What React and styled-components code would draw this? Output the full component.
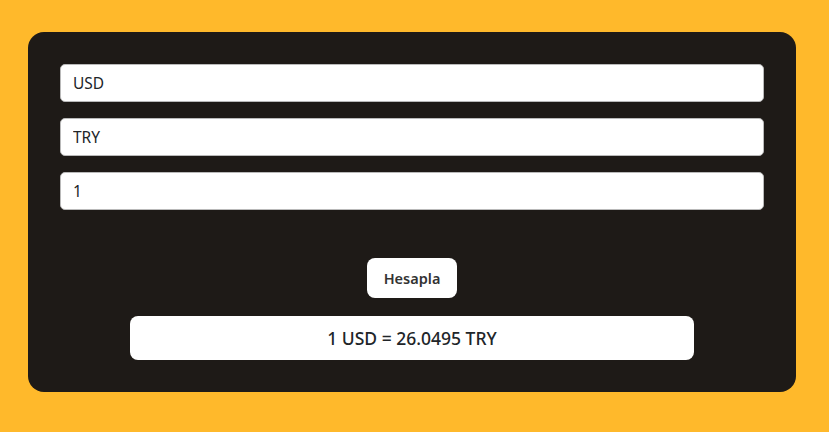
import React from "react";
import styled, { createGlobalStyle } from "styled-components";

const Global = createGlobalStyle`
  html, body { margin: 0; padding: 0; }
  body {
    background: #ffb92b;
    font-family: "Noto Sans", "Open Sans", sans-serif;
    width: 829px;
    height: 432px;
  }
`;

const Page = styled.div`
  padding: 32px 33px 40px 28px;
`;

const Card = styled.div`
  background: #1e1a17;
  border-radius: 16px;
  padding: 32px;
  display: flex;
  flex-direction: column;
  align-items: center;
  width: 768px;
  box-sizing: border-box;
`;

const Fields = styled.div`
  display: flex;
  flex-direction: column;
  gap: 16px;
  width: 100%;
  margin-bottom: 48px;
`;

const Field = styled.input`
  box-sizing: border-box;
  width: 100%;
  height: 38px;
  border: 1px solid #b9b9b9;
  border-radius: 5px;
  background: #fff;
  padding: 0 12px;
  font-family: inherit;
  font-size: 15.5px;
  color: #212529;
  outline: none;
`;

const Button = styled.button`
  width: 90px;
  height: 40px;
  border: none;
  border-radius: 8px;
  background: #fff;
  font-family: inherit;
  font-size: 14.5px;
  font-weight: 600;
  color: #333;
  cursor: pointer;
  margin-bottom: 18px;
  padding: 0;
`;

const Result = styled.div`
  box-sizing: border-box;
  width: 564px;
  height: 44px;
  border-radius: 8px;
  background: #fff;
  display: flex;
  align-items: center;
  justify-content: center;
  font-size: 17.5px;
  font-weight: 500;
  color: #212529;
`;

export default function App() {
  return (
    <>
      <Global />
      <Page>
        <Card>
          <Fields>
            <Field defaultValue="USD" />
            <Field defaultValue="TRY" />
            <Field defaultValue="1" />
          </Fields>
          <Button>Hesapla</Button>
          <Result>1 USD = 26.0495 TRY</Result>
        </Card>
      </Page>
    </>
  );
}
